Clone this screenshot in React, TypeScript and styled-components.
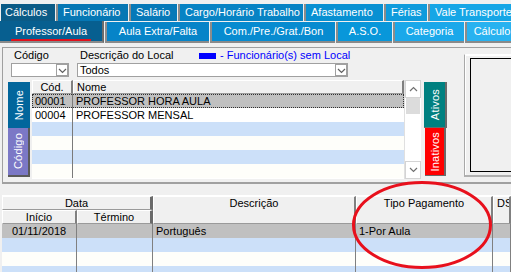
import * as React from 'react'
import styled, { createGlobalStyle } from 'styled-components'

const Global = createGlobalStyle`
  html, body { margin: 0; padding: 0; background: #f0f0f0; }
  body { font-family: "Liberation Sans", Arial, sans-serif; font-size: 11px; color: #000; }
`

const Screen = styled.div`
  position: relative;
  width: 511px;
  height: 272px;
  overflow: hidden;
  background: #f0f0f0;
`

const TopTabs = styled.div`
  display: flex;
  height: 17px;
  padding: 4px 0 0 1px;
`

const TopTab = styled.div<{ $w: number; $bg: string }>`
  flex: none;
  box-sizing: border-box;
  width: ${p => p.$w}px;
  height: 17px;
  line-height: 17px;
  padding-left: 4px;
  background: ${p => p.$bg};
  color: #fff;
  white-space: nowrap;
  overflow: hidden;
  & + & {
    margin-left: 1px;
    border-left: 2px solid #8c8c8c;
    padding-left: 5px;
  }
`

const SubTabs = styled.div`
  display: flex;
  height: 22px;
`

const SubTab = styled.div<{ $w: number; $bg: string; $active?: boolean }>`
  flex: none;
  box-sizing: border-box;
  width: ${p => p.$w}px;
  height: ${p => (p.$active ? 22 : 21)}px;
  margin-top: ${p => (p.$active ? 0 : 1)}px;
  background: ${p => p.$bg};
  color: #fff;
  text-align: center;
  line-height: ${p => (p.$active ? 20 : 19)}px;
  white-space: nowrap;
  overflow: hidden;
  border-bottom: 2px solid #8a8a8a;
  border-right: ${p => (p.$active ? '2px solid #6c6c6c' : 'none')};
  & + & {
    margin-left: 1px;
    border-left: 2px solid #8c8c8c;
  }
`

const Underlined = styled.span`
  display: inline-block;
  padding: 0 4px;
  line-height: 15px;
  border-bottom: 2px solid #e0101c;
`

const Panel = styled.div`
  display: flex;
  box-sizing: border-box;
  height: 137px;
  margin: 4px 0 0 2px;
  border-top: 1px solid #a0a0a0;
  border-left: 1px solid #a0a0a0;
  border-bottom: 2px solid #a0a0a0;
`

const LeftColumn = styled.div`
  width: 461px;
  flex: none;
`

const LabelRow = styled.div`
  display: flex;
  align-items: center;
  height: 13px;
  padding-top: 1px;
  line-height: 13px;
`

const Label = styled.div<{ $w: number; $indent?: number }>`
  flex: none;
  width: ${p => p.$w}px;
  margin-left: ${p => p.$indent ?? 0}px;
`

const LegendSwatch = styled.div`
  flex: none;
  width: 17px;
  height: 6px;
  background: #0000ff;
  margin-right: 4px;
`

const LegendText = styled.div`
  color: #0000ff;
  white-space: nowrap;
`

const ComboRow = styled.div`
  display: flex;
  gap: 8px;
  margin: 1px 0 0 8px;
`

const Combo = styled.div<{ $w: number }>`
  display: flex;
  box-sizing: border-box;
  width: ${p => p.$w}px;
  height: 14px;
  background: #fff;
  border: 1px solid #a0a0a0;
  line-height: 12px;
  padding-left: 2px;
`

const ComboText = styled.div`
  flex: 1;
`

const ComboButton = styled.div`
  flex: none;
  width: 12px;
  height: 12px;
  box-sizing: border-box;
  border: 1px solid #a0a0a0;
  display: flex;
  align-items: flex-end;
  justify-content: center;
  padding-bottom: 1px;
  background: #fff;
`

const GridArea = styled.div`
  display: flex;
  margin: 3px 0 0 5px;
  height: 99px;
`

const SideTabs = styled.div`
  display: flex;
  flex-direction: column;
  width: 22px;
  padding-top: 2px;
  margin-right: 2px;
`

const SideTab = styled.div<{ $bg: string; $h: number; $shadow?: boolean }>`
  box-sizing: border-box;
  width: 22px;
  height: ${p => p.$h}px;
  background: ${p => p.$bg};
  color: #fff;
  display: flex;
  align-items: center;
  justify-content: center;
  border-right: ${p => (p.$shadow ? '2px solid #5a5a5a' : 'none')};
  border-bottom: ${p => (p.$shadow ? '2px solid #5a5a5a' : 'none')};
`

const Vertical = styled.span`
  writing-mode: vertical-rl;
  transform: rotate(180deg);
  white-space: nowrap;
  letter-spacing: 0.2px;
`

const Grid = styled.div`
  width: 372px;
  flex: none;
  background: #fff;
`

const GridHeader = styled.div`
  display: grid;
  grid-template-columns: 41px 1fr;
  height: 14px;
`

const HeadCell = styled.div<{ $align?: string }>`
  box-sizing: border-box;
  background: #f0f0f0;
  border-top: 1px solid #fff;
  border-left: 1px solid #fff;
  border-right: 2px solid #808080;
  border-bottom: 1px solid #9a9a9a;
  text-align: ${p => p.$align ?? 'center'};
  padding-left: ${p => (p.$align === 'left' ? 3 : 0)}px;
  line-height: 12px;
  white-space: nowrap;
  overflow: hidden;
`

const GridRow = styled.div<{ $bg: string; $focus?: boolean }>`
  display: grid;
  grid-template-columns: 41px 1fr;
  height: 14px;
  box-sizing: border-box;
  background: ${p => p.$bg};
  outline: ${p => (p.$focus ? '1px dotted #303030' : 'none')};
  outline-offset: -1px;
  line-height: 14px;
`

const Cell = styled.div`
  box-sizing: border-box;
  padding: 0 3px;
  border-right: 1px solid #7a7a7a;
  white-space: nowrap;
  overflow: hidden;
  &:last-child { border-right: none; }
`

const ScrollBar = styled.div`
  display: flex;
  flex-direction: column;
  width: 17px;
  flex: none;
  background: #fff;
  border-left: 1px solid #e0e0e0;
  box-sizing: border-box;
`

const ScrollButton = styled.div`
  height: 16px;
  display: flex;
  align-items: center;
  justify-content: center;
  background: #fff;
  border: 1px solid #d4d4d4;
`

const ScrollThumb = styled.div`
  height: 16px;
  margin: 0 1px;
  background: #dcdcdc;
`

const ScrollTrack = styled.div`
  flex: 1;
`

const StatusTabs = styled.div`
  display: flex;
  flex-direction: column;
  width: 23px;
  padding-top: 2px;
  margin-left: 3px;
`

const StatusTab = styled.div<{ $bg: string; $h: number; $inset?: number }>`
  box-sizing: border-box;
  width: ${p => 23 - (p.$inset ?? 0) * 2}px;
  margin-left: ${p => p.$inset ?? 0}px;
  height: ${p => p.$h}px;
  background: ${p => p.$bg};
  color: #fff;
  display: flex;
  align-items: center;
  justify-content: center;
  border-right: 2px solid #6a6a6a;
  border-bottom: 1px solid #6a6a6a;
`

const PhotoFrame = styled.div`
  flex: none;
  box-sizing: border-box;
  width: 47px;
  height: 123px;
  margin-top: 6px;
  padding: 3px 0 3px 5px;
  border-left: 1px solid #a8a8a8;
  border-top: 1px solid #fff;
  border-bottom: 2px solid #b0b0b0;
  box-shadow: inset 1px 1px 0 #fff;
`

const Photo = styled.div`
  height: 100%;
  box-sizing: border-box;
  border: 1px solid #000;
  border-right: none;
  background: #f0f0f0;
`

const Lower = styled.div`
  margin: 11px 0 0 2px;
  border-top: 1px solid #ffffff;
`

const LowerGrid = styled.div`
  display: grid;
  grid-template-columns: 75px 76px 203px 137px 1fr;
  grid-auto-rows: 14px;
  background: #fff;
`

const LowerHead = styled(HeadCell)<{ $col: string; $row: string; $thick?: boolean }>`
  grid-column: ${p => p.$col};
  grid-row: ${p => p.$row};
  border-right: ${p => (p.$thick ? '3px solid #6a6a6a' : '2px solid #808080')};
  line-height: 13px;
`

const LowerCell = styled.div<{ $bg: string; $align?: string }>`
  box-sizing: border-box;
  background: ${p => p.$bg};
  padding: 0 3px;
  line-height: 15px;
  text-align: ${p => p.$align ?? 'left'};
  border-right: 1px solid #808080;
  white-space: nowrap;
  overflow: hidden;
`

const Circle = styled.svg`
  position: absolute;
  left: 351px;
  top: 180px;
  pointer-events: none;
`

function Chevron(props: { up?: boolean; color?: string }) {
  return (
    <svg width="9" height="6" viewBox="0 0 9 6">
      <polyline
        points={props.up ? '1,5 4.5,1.5 8,5' : '1,1 4.5,4.5 8,1'}
        fill="none"
        stroke={props.color ?? '#707070'}
        strokeWidth="1.2"
      />
    </svg>
  )
}

const topTabs = [
  { label: 'Cálculos', w: 54, bg: '#0b5b86' },
  { label: 'Funcionário', w: 72, bg: '#0677b4' },
  { label: 'Salário', w: 48, bg: '#0679b8' },
  { label: 'Cargo/Horário Trabalho', w: 125, bg: '#0783c4' },
  { label: 'Afastamento', w: 79, bg: '#0890d2' },
  { label: 'Férias', w: 43, bg: '#0f9bdc' },
  { label: 'Vale Transporte', w: 90, bg: '#16a6e6' },
]

const subTabs = [
  { label: 'Aula Extra/Falta', w: 104, bg: '#0684c8' },
  { label: 'Com./Pre./Grat./Bon', w: 125, bg: '#078bd0' },
  { label: 'A.S.O.', w: 56, bg: '#0897da' },
  { label: 'Categoria', w: 71, bg: '#1aa8ea' },
  { label: 'Cálculo', w: 52, bg: '#28b2f0' },
]

const places = [
  { code: '00001', name: 'PROFESSOR HORA AULA' },
  { code: '00004', name: 'PROFESSOR MENSAL' },
  null,
  null,
  null,
  null,
]

const WHITE = '#fefefa'
const BLUE = '#cce0f9'
const SELECTED = '#c0c0c0'

function rowColor(i: number) {
  if (i === 0) return SELECTED
  if (i === 1) return '#ffffff'
  return i % 2 === 0 ? BLUE : WHITE
}

const lessons = [
  { start: '01/11/2018', end: '', desc: 'Português', pay: '1-Por Aula' },
  null,
  null,
  null,
]

export default function App() {
  return (
    <Screen>
      <Global />
      <TopTabs>
        {topTabs.map(t => (
          <TopTab key={t.label} $w={t.w} $bg={t.bg}>
            {t.label}
          </TopTab>
        ))}
      </TopTabs>

      <SubTabs>
        <SubTab $w={104} $bg="#075f90" $active>
          <Underlined>Professor/Aula</Underlined>
        </SubTab>
        {subTabs.map(t => (
          <SubTab key={t.label} $w={t.w} $bg={t.bg}>
            {t.label}
          </SubTab>
        ))}
      </SubTabs>

      <Panel>
        <LeftColumn>
          <LabelRow>
            <Label $w={66} $indent={11}>Código</Label>
            <Label $w={119}>Descrição do Local</Label>
            <LegendSwatch />
            <LegendText>- Funcionário(s) sem Local</LegendText>
          </LabelRow>

          <ComboRow>
            <Combo $w={58}>
              <ComboText />
              <ComboButton>
                <Chevron color="#606060" />
              </ComboButton>
            </Combo>
            <Combo $w={271}>
              <ComboText>Todos</ComboText>
              <ComboButton>
                <Chevron color="#606060" />
              </ComboButton>
            </Combo>
          </ComboRow>

          <GridArea>
            <SideTabs>
              <SideTab $bg="#02669c" $h={46}>
                <Vertical>Nome</Vertical>
              </SideTab>
              <SideTab $bg="#7b78c6" $h={49} $shadow>
                <Vertical>Código</Vertical>
              </SideTab>
            </SideTabs>

            <Grid>
              <GridHeader>
                <HeadCell>Cód.</HeadCell>
                <HeadCell $align="left">Nome</HeadCell>
              </GridHeader>
              {places.map((p, i) => (
                <GridRow key={i} $bg={rowColor(i)} $focus={i === 0}>
                  <Cell>{p?.code}</Cell>
                  <Cell>{p?.name}</Cell>
                </GridRow>
              ))}
            </Grid>

            <ScrollBar>
              <ScrollButton>
                <Chevron up />
              </ScrollButton>
              <ScrollThumb />
              <ScrollTrack />
              <ScrollButton>
                <Chevron />
              </ScrollButton>
            </ScrollBar>

            <StatusTabs>
              <StatusTab $bg="#008080" $h={46}>
                <Vertical>Ativos</Vertical>
              </StatusTab>
              <StatusTab $bg="#ff0000" $h={48} $inset={1}>
                <Vertical>Inativos</Vertical>
              </StatusTab>
            </StatusTabs>
          </GridArea>
        </LeftColumn>

        <PhotoFrame>
          <Photo />
        </PhotoFrame>
      </Panel>

      <Lower>
        <LowerGrid>
          <LowerHead $col="1 / 3" $row="1" $thick>Data</LowerHead>
          <LowerHead $col="3" $row="1 / 3">Descrição</LowerHead>
          <LowerHead $col="4" $row="1 / 3">Tipo Pagamento</LowerHead>
          <LowerHead $col="5" $row="1 / 3" $align="left">DS</LowerHead>
          <LowerHead $col="1" $row="2">Início</LowerHead>
          <LowerHead $col="2" $row="2" $thick>Término</LowerHead>
          {lessons.map((l, i) => {
            const bg = i === 0 ? SELECTED : i % 2 === 1 ? BLUE : WHITE
            return (
              <React.Fragment key={i}>
                <LowerCell $bg={bg} $align="center">{l?.start}</LowerCell>
                <LowerCell $bg={bg}>{l?.end}</LowerCell>
                <LowerCell $bg={bg}>{l?.desc}</LowerCell>
                <LowerCell $bg={bg}>{l?.pay}</LowerCell>
                <LowerCell $bg={bg} />
              </React.Fragment>
            )
          })}
        </LowerGrid>
      </Lower>

      <Circle width="142" height="90" viewBox="0 0 142 90">
        <ellipse cx="71" cy="45" rx="68.5" ry="42.5" fill="none" stroke="#e8101c" strokeWidth="3" />
      </Circle>
    </Screen>
  )
}
